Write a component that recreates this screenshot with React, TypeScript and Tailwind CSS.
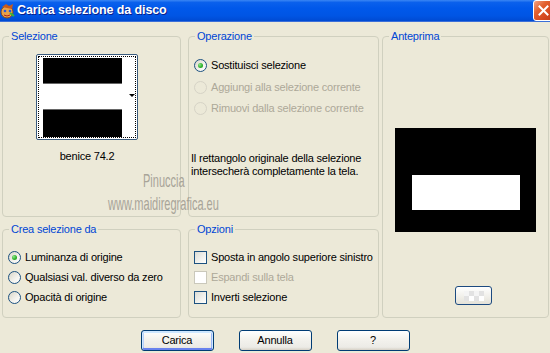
import React from "react";

function Radio({ checked = false, disabled = false }: { checked?: boolean; disabled?: boolean }) {
  return (
    <span
      className={
        disabled
          ? "flex items-center justify-center w-[13px] h-[13px] shrink-0 rounded-full border border-[#d6d3c6] bg-transparent"
          : "flex items-center justify-center w-[13px] h-[13px] shrink-0 rounded-full border border-[#1c5180] bg-[linear-gradient(135deg,#d8d5c8_0%,#f4f3ee_60%,#ffffff_100%)]"
      }
    >
      {checked && (
        <span className="w-[5px] h-[5px] rounded-full bg-[radial-gradient(circle_at_35%_35%,#8ee68a_0%,#30b22c_55%,#1e9a1a_100%)]" />
      )}
    </span>
  );
}

function Check({ disabled = false }: { disabled?: boolean }) {
  return (
    <span
      className={
        disabled
          ? "w-[13px] h-[13px] shrink-0 border border-[#cac8bb] bg-white"
          : "w-[13px] h-[13px] shrink-0 border border-[#1c5180] bg-[linear-gradient(135deg,#dcdcd5_0%,#f2f2ee_60%,#ffffff_100%)]"
      }
    />
  );
}

function Group({ label, className, children }: { label: string; className: string; children?: React.ReactNode }) {
  return (
    <div className={"relative border border-[#d0d0bf] rounded-[4px] " + className}>
      <span className="absolute left-[6px] -top-[8px] px-[2px] bg-[#ece9d8] text-[#0046d5] leading-[14px] whitespace-nowrap">
        {label}
      </span>
      {children}
    </div>
  );
}

function XpButton({ label, primary = false }: { label: string; primary?: boolean }) {
  return (
    <button
      className={
        primary
          ? "w-[73px] h-[21px] rounded-[3px] border border-[#003c74] bg-[linear-gradient(to_bottom,#ffffff_0%,#f4f3ee_40%,#ecebe6_85%,#d6d0c5_100%)] shadow-[inset_0_1px_0_1px_#cee7ff,inset_0_-1px_0_1px_#6982ee,inset_1px_0_0_1px_#b9d1fa,inset_-1px_0_0_1px_#9ab6f5] text-black leading-[13px]"
          : "w-[73px] h-[21px] rounded-[3px] border border-[#003c74] bg-[linear-gradient(to_bottom,#ffffff_0%,#f4f3ee_40%,#ecebe6_85%,#d6d0c5_100%)] text-black leading-[13px]"
      }
    >
      {label}
    </button>
  );
}

function Row({ children, disabled = false, h }: { children: React.ReactNode; disabled?: boolean; h: string }) {
  return (
    <div className={"flex items-center gap-[4px] whitespace-nowrap " + h + (disabled ? " text-[#aca899]" : " text-black")}>
      {children}
    </div>
  );
}

export default function App() {
  return (
    <div className="relative w-[550px] h-[353px] overflow-hidden bg-[#ece9d8] font-['Liberation_Sans',Arial,sans-serif] text-[11px] tracking-[-0.2px] text-black">
      {/* Title bar */}
      <div className="flex items-center h-[22px] bg-[linear-gradient(to_bottom,#3a86f4_0%,#0a60ec_12%,#0058ea_40%,#0055e4_75%,#004ad2_100%)] border-b border-[#3b6fd8]">
        <svg width="15" height="16" viewBox="0 0 15 16" className="shrink-0">
          <ellipse cx="7" cy="9" rx="6" ry="6" fill="#e8a24a" />
          <ellipse cx="7" cy="9" rx="6" ry="6" fill="none" stroke="#8a4a18" strokeWidth="1" />
          <path d="M2 4 L6 1 L9 3 L13 1 L12 6" fill="#c85a1c" />
          <circle cx="5" cy="8" r="1.3" fill="#2a5ad8" />
          <circle cx="10" cy="8" r="1.3" fill="#2a5ad8" />
          <path d="M10 10 L14 13" stroke="#38b838" strokeWidth="2" />
          <path d="M4 12 Q7 14 10 12" stroke="#b02020" strokeWidth="1" fill="none" />
        </svg>
        <span className="ml-[2px] text-white font-bold text-[12.5px] tracking-[-0.1px] [text-shadow:1px_1px_0_#0a1e8a] whitespace-nowrap">
          Carica selezione da disco
        </span>
        <div className="ml-auto mr-[-4px] w-[21px] h-[21px] rounded-[3px] border border-white bg-[linear-gradient(135deg,#f2a386_0%,#e2612f_35%,#d5471f_70%,#c23c16_100%)] flex items-center justify-center">
          <svg width="11" height="11" viewBox="0 0 11 11">
            <path d="M1.5 1.5 L9.5 9.5 M9.5 1.5 L1.5 9.5" stroke="#ffffff" strokeWidth="2" strokeLinecap="square" />
          </svg>
        </div>
      </div>

      {/* Main area */}
      <div className="flex pl-[2px] pt-[14px]">
        {/* Left column */}
        <div className="flex flex-col w-[179px]">
          <Group label="Selezione" className="h-[181px]">
            <div className="flex flex-col items-center pt-[17px] pr-[9px]">
              <div className="w-[102px] h-[86px] rounded-[2px] border border-[#3a5a7c] bg-white p-[1px]">
                <div className="relative w-full h-full border border-dotted border-black pl-[4px] pt-[1px] flex flex-col">
                  <div className="w-[79px] h-[26px] bg-black border-b border-[#666666]" />
                  <div className="w-[79px] h-[25px]" />
                  <div className="w-[79px] flex-1 bg-black border-t border-[#666666]" />
                  <span className="absolute right-[0px] top-[37px] w-0 h-0 border-l-[3px] border-r-[3px] border-t-[3px] border-l-transparent border-r-transparent border-t-black" />
                </div>
              </div>
              <div className="mt-[10px] leading-[13px]">benice 74.2</div>
            </div>
          </Group>
          <Group label="Crea selezione da" className="mt-[12px] h-[89px]">
            <div className="flex flex-col pt-[17px] pl-[5px]">
              <Row h="h-[20px]">
                <Radio checked />
                <span>Luminanza di origine</span>
              </Row>
              <Row h="h-[20px]">
                <Radio />
                <span>Qualsiasi val. diverso da zero</span>
              </Row>
              <Row h="h-[20px]">
                <Radio />
                <span>Opacità di origine</span>
              </Row>
            </div>
          </Group>
        </div>

        {/* Middle column */}
        <div className="flex flex-col w-[191px] ml-[7px]">
          <Group label="Operazione" className="h-[181px]">
            <div className="flex flex-col pt-[18px]">
              <div className="flex flex-col pl-[5px]">
                <Row h="h-[21px]">
                  <Radio checked />
                  <span>Sostituisci selezione</span>
                </Row>
                <Row h="h-[22px]" disabled>
                  <Radio disabled />
                  <span>Aggiungi alla selezione corrente</span>
                </Row>
                <Row h="h-[21px]" disabled>
                  <Radio disabled />
                  <span>Rimuovi dalla selezione corrente</span>
                </Row>
              </div>
              <p className="mt-[33px] pl-[2px] leading-[13px]">
                Il rettangolo originale della selezione
                <br />
                intersecherà completamente la tela.
              </p>
            </div>
          </Group>
          <Group label="Opzioni" className="mt-[12px] h-[89px]">
            <div className="flex flex-col pt-[17px] pl-[5px]">
              <Row h="h-[20px]">
                <Check />
                <span>Sposta in angolo superiore sinistro</span>
              </Row>
              <Row h="h-[20px]" disabled>
                <Check disabled />
                <span>Espandi sulla tela</span>
              </Row>
              <Row h="h-[20px]">
                <Check />
                <span>Inverti selezione</span>
              </Row>
            </div>
          </Group>
        </div>

        {/* Right column */}
        <Group label="Anteprima" className="w-[167px] ml-[3px] h-[282px]">
          <div className="flex flex-col items-center pt-[91px]">
            <div className="w-[141px] h-[104px] bg-black flex justify-center pt-[47px]">
              <div className="w-[108px] h-[35px] bg-white" />
            </div>
            <div className="self-start ml-[72px] mt-[54px] w-[37px] h-[19px] rounded-[3px] border border-[#1c4a80] bg-[linear-gradient(to_bottom,#ffffff_0%,#f2f1ec_50%,#e4e2d8_100%)] flex items-center justify-center">
              <div className="grid grid-cols-[5px_5px_5px_5px] grid-rows-[5px_5px]">
                <span className="bg-[#f4f4f4]" />
                <span className="bg-[#e2e2e2]" />
                <span className="bg-[#f4f4f4]" />
                <span className="bg-[#e2e2e2]" />
                <span className="bg-[#e2e2e2]" />
                <span className="bg-[#ffffff]" />
                <span className="bg-[#e2e2e2]" />
                <span className="bg-[#ffffff]" />
              </div>
            </div>
          </div>
        </Group>
      </div>

      {/* Buttons */}
      <div className="flex justify-center gap-[25px] mt-[12px]">
        <XpButton label="Carica" primary />
        <XpButton label="Annulla" />
        <XpButton label="?" />
      </div>

      {/* Watermark */}
      <div className="absolute left-[143px] top-[171px] origin-left scale-x-[0.58] text-[19px] tracking-normal leading-none text-[#a8a498] whitespace-nowrap pointer-events-none">
        Pinuccia
      </div>
      <div className="absolute left-[108px] top-[194px] origin-left scale-x-[0.58] text-[19px] tracking-normal leading-none text-[#a8a498] whitespace-nowrap pointer-events-none">
        www.maidiregrafica.eu
      </div>
    </div>
  );
}
